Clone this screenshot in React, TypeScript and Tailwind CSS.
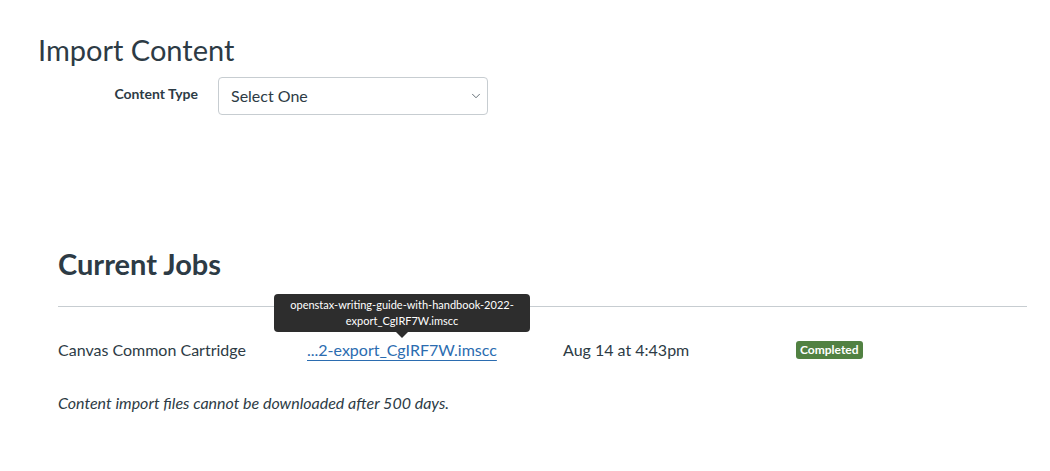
import { ChevronDown } from 'lucide-react';

export default function App() {
  return (
    <div className="min-h-[471px] bg-white text-[#2D3B45]" style={{ fontFamily: 'Lato, "Noto Sans", sans-serif' }}>
      {/* Import form */}
      <div className="px-[38px] pt-[32px]">
        <h1 className="text-[29px] leading-[36px] font-normal">Import Content</h1>
        <div className="mt-[9px] flex items-start gap-[20px]">
          <label className="w-[160px] pt-[7px] text-right text-[14px] font-bold leading-[20px]">Content Type</label>
          <div className="relative w-[270px]">
            <div className="flex h-[38px] items-center justify-between rounded-[4px] border border-[#C7CDD1] pl-[12px] pr-[4px]">
              <span className="text-[16px]">Select One</span>
              <ChevronDown className="h-[14px] w-[14px] text-[#2D3B45]" strokeWidth={1.25} />
            </div>
          </div>
        </div>
      </div>

      {/* Current jobs */}
      <div className="pl-[58px] pr-[23px] pt-[131px]">
        <h2 className="text-[29px] font-bold leading-[36px]">Current Jobs</h2>
        <div className="mt-[24px] border-t border-[#C7CDD1]" />
        <div className="mt-[31px] flex items-center text-[16px] leading-[24px]">
          <span className="w-[249px]">Canvas Common Cartridge</span>
          <div className="relative w-[256px]">
            <a href="#" className="text-[#2B6CB0] underline underline-offset-[4px]">...2-export_CgIRF7W.imscc</a>
            {/* Tooltip */}
            <div className="absolute bottom-[30px] left-[-33px] w-[256px] whitespace-nowrap rounded-[4px] bg-[#2D2D2D] py-[3px] text-center text-[11px] leading-[16px] text-white">
              openstax-writing-guide-with-handbook-2022-
              <br />
              export_CgIRF7W.imscc
              <div className="absolute bottom-[-6px] left-[122px] h-0 w-0 border-x-[6px] border-t-[6px] border-x-transparent border-t-[#2D2D2D]" />
            </div>
          </div>
          <span className="w-[233px]">Aug 14 at 4:43pm</span>
          <span className="rounded-[3px] bg-[#518142] px-[4px] text-[12px] font-bold leading-[18px] text-white">Completed</span>
        </div>
        <p className="mt-[29px] text-[16px] italic leading-[24px]">Content import files cannot be downloaded after 500 days.</p>
      </div>
    </div>
  );
}
